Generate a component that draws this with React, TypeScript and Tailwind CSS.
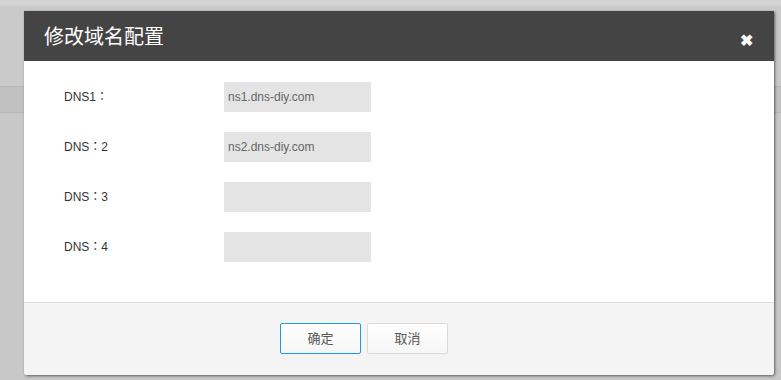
import { useState } from 'react'

const rows = [
  { label: 'DNS1：', value: 'ns1.dns-diy.com' },
  { label: 'DNS：2', value: 'ns2.dns-diy.com' },
  { label: 'DNS：3', value: '' },
  { label: 'DNS：4', value: '' },
]

const App = () => {
  const [values, setValues] = useState(rows.map((r) => r.value))

  return (
    <div
      className="relative h-[380px] w-[781px] overflow-hidden bg-[#c8c8c8]"
      style={{ fontFamily: '"Liberation Sans", Arial, "Noto Sans CJK TC", sans-serif' }}
    >
      {/* faded page behind the modal */}
      <div className="h-[6px] bg-[#d3d3d3]" />
      <div className="h-[80px] bg-[#cacaca]" />
      <div className="h-[27px] border-y border-[#b8b8b8] bg-[#c1c1c1]" />

      <div className="absolute left-[24px] top-[11px] flex h-[364px] w-[750px] flex-col overflow-hidden rounded-b-[3px] bg-white shadow-[1px_1px_3px_rgba(0,0,0,0.55)]">
        <div className="flex h-[50px] shrink-0 items-center justify-between bg-[#444444] pl-[20px] pr-[21px]">
          <h3 className="text-[20px] leading-none text-white" style={{ fontFamily: '"Noto Sans CJK SC", sans-serif' }}>
            修改域名配置
          </h3>
          <span className="mt-[10px] text-[16px] font-bold leading-none text-white">✖</span>
        </div>

        <div className="flex flex-1 flex-col gap-[20px] pl-[40px] pt-[21px]">
          {rows.map((row, i) => (
            <div key={row.label} className="flex h-[30px] items-center">
              <label className="w-[160px] text-[12px] text-[#333]">{row.label}</label>
              <input
                className="h-[30px] w-[147px] bg-[#e4e4e4] px-[4px] text-[12px] text-[#666] outline-none"
                value={values[i]}
                onChange={(e) =>
                  setValues((v) => v.map((x, j) => (j === i ? e.target.value : x)))
                }
              />
            </div>
          ))}
        </div>

        <div className="flex h-[73px] shrink-0 items-center gap-[6px] border-t border-[#dcdcdc] bg-[#f4f4f4] pb-[2px] pl-[256px]">
          <button
            className="h-[31px] w-[81px] rounded-[2px] border border-[#1a9ae0] bg-gradient-to-b from-white to-[#f6f6f6] text-[13px] text-[#555]"
            style={{ fontFamily: '"Noto Sans CJK SC", sans-serif' }}
          >
            确定
          </button>
          <button
            className="h-[31px] w-[81px] rounded-[2px] border border-[#dadada] bg-gradient-to-b from-white to-[#f6f6f6] text-[13px] text-[#555]"
            style={{ fontFamily: '"Noto Sans CJK SC", sans-serif' }}
          >
            取消
          </button>
        </div>
      </div>
    </div>
  )
}

export default App
